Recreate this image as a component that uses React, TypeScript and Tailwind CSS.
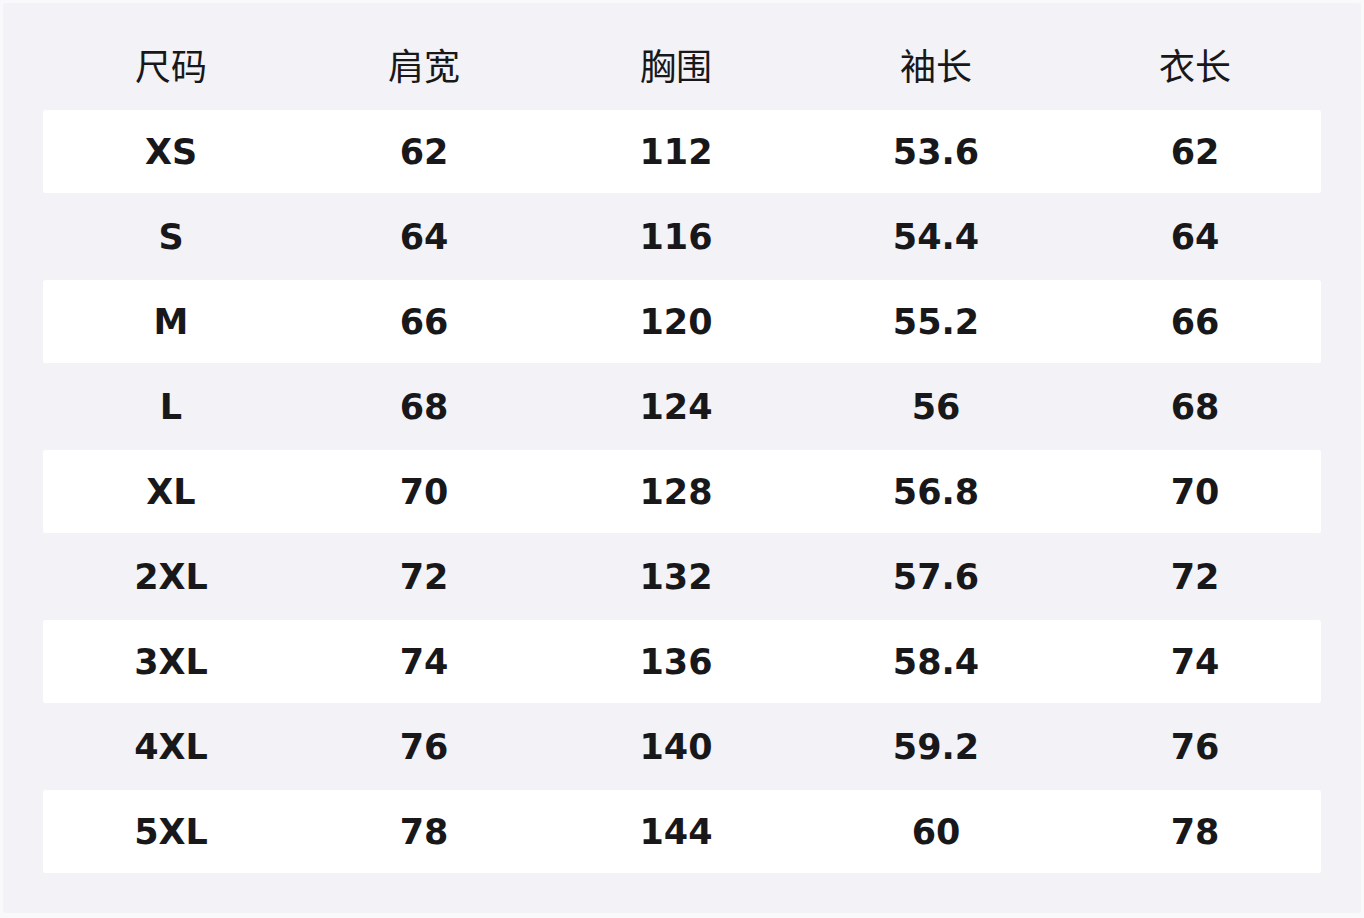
import React from "react";

const header = ["尺码", "肩宽", "胸围", "袖长", "衣长"];
const rows = [
  ["XS", "62", "112", "53.6", "62"],
  ["S", "64", "116", "54.4", "64"],
  ["M", "66", "120", "55.2", "66"],
  ["L", "68", "124", "56", "68"],
  ["XL", "70", "128", "56.8", "70"],
  ["2XL", "72", "132", "57.6", "72"],
  ["3XL", "74", "136", "58.4", "74"],
  ["4XL", "76", "140", "59.2", "76"],
  ["5XL", "78", "144", "60", "78"],
];

const cols = "grid grid-cols-[256px_250px_254px_266px_252px]";

export default function App() {
  return (
    <div className="w-[1364px] h-[918px] bg-[#f9f9fb] pt-[3px] px-[3px]">
      <div className="h-[910px] bg-[#f2f2f7] rounded-[3px] px-[40px] pt-[20px] text-[#18181a]">
        <div
          className={`${cols} h-[86px] items-center pb-[4px] text-[36px]`}
          style={{ fontFamily: '"Noto Sans CJK SC", "Noto Sans", sans-serif' }}
        >
          {header.map((h) => (
            <div key={h} className="text-center leading-none">
              {h}
            </div>
          ))}
        </div>
        <div style={{ fontFamily: '"DejaVu Sans", "Noto Sans CJK SC", sans-serif' }}>
          {rows.map((r, i) => (
            <div
              key={r[0]}
              className={`${cols} h-[85px] items-center pt-[2px] border-y border-[#f2f2f7] rounded-[3px] text-[35px] font-bold ${
                i % 2 === 0 ? "bg-white" : ""
              }`}
            >
              {r.map((c, j) => (
                <div key={j} className="text-center leading-none">
                  {c}
                </div>
              ))}
            </div>
          ))}
        </div>
      </div>
    </div>
  );
}
